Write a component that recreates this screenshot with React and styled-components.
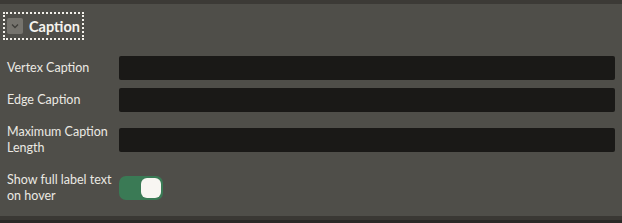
import React, { useState } from "react";
import styled, { createGlobalStyle } from "styled-components";

const GlobalStyle = createGlobalStyle`
    html, body {
        margin: 0;
        padding: 0;
        background: #2a2826;
    }
    body {
        font-family: Lato, "Noto Sans", sans-serif;
    }
`

const Page = styled.div`
    width: 622px;
    height: 223px;
    background: #2a2826;
    display: flex;
    flex-direction: column;
`

const TopBar = styled.div`
    height: 4px;
    background: #3c3a36;
`

const Panel = styled.section`
    background: #4f4e49;
    padding: 8px 7px 8px 3px;
    border-bottom: 4px solid #3a3834;
`

const Header = styled.button`
    display: inline-flex;
    align-items: center;
    gap: 6px;
    height: 28px;
    padding: 0 2px 0 2px;
    background: transparent;
    border: 2px dotted #f2f0ea;
    color: #f6f4ef;
    font-family: Lato, "Noto Sans", sans-serif;
    font-size: 14.5px;
    font-weight: 700;
    cursor: pointer;
`

const Chevron = styled.span`
    width: 16px;
    height: 16px;
    border-radius: 2px;
    background: #75736d;
    display: flex;
    align-items: center;
    justify-content: center;
`

const Fields = styled.div`
    display: grid;
    grid-template-columns: 112px 1fr;
    row-gap: 8px;
    padding: 16px 0 0 4px;
`

const Label = styled.label`
    display: flex;
    align-items: center;
    min-height: ${(p) => (p.$tall ? "40px" : "24px")};
    font-size: 12.5px;
    line-height: 16px;
    color: #ebe9e3;
`

const Cell = styled.div`
    display: flex;
    align-items: center;
`

const TextInput = styled.input`
    width: 100%;
    height: 24px;
    box-sizing: border-box;
    border: none;
    border-radius: 2px;
    background: #1a1917;
    color: #ebe9e3;
    outline: none;
    padding: 0 8px;
`

const Toggle = styled.button`
    width: 44px;
    height: 24px;
    border: none;
    border-radius: 7px;
    padding: 2px;
    display: flex;
    justify-content: ${(p) => (p.$on ? "flex-end" : "flex-start")};
    background: ${(p) => (p.$on ? "#3a7a55" : "#75736d")};
    cursor: pointer;
`

const Knob = styled.span`
    width: 20px;
    height: 20px;
    border-radius: 6px;
    background: #f8f6f2;
`

const App = () => {
    const [showFull, setShowFull] = useState(true);

    return (
        <Page>
            <GlobalStyle />
            <TopBar />
            <Panel>
                <Header>
                    <Chevron>
                        <svg width="12" height="12" viewBox="0 0 12 12">
                            <path d="M3 4.5 L6 7.5 L9 4.5" fill="none" stroke="#3e3d39" strokeWidth="1.3" />
                        </svg>
                    </Chevron>
                    Caption
                </Header>
                <Fields>
                    <Label>Vertex Caption</Label>
                    <Cell><TextInput /></Cell>
                    <Label>Edge Caption</Label>
                    <Cell><TextInput /></Cell>
                    <Label $tall>Maximum Caption Length</Label>
                    <Cell><TextInput /></Cell>
                    <Label $tall>Show full label text on hover</Label>
                    <Cell>
                        <Toggle $on={showFull} onClick={() => setShowFull(!showFull)}>
                            <Knob />
                        </Toggle>
                    </Cell>
                </Fields>
            </Panel>
        </Page>
    );
};

export default App;
